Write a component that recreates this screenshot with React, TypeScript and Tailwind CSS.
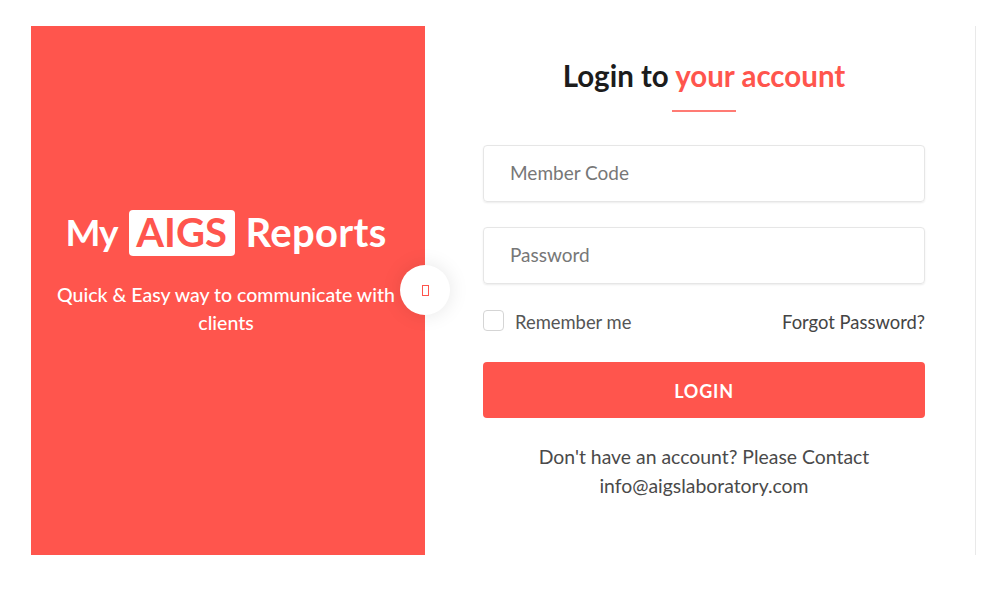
const FONT = "font-['Lato','Noto_Sans',sans-serif]";

export default function App() {
  return (
    <div className={`${FONT} w-[1000px] h-[596px] bg-white pt-[26px] pl-[31px] overflow-hidden`}>
      <div className="flex w-[945px] h-[529px] border-r border-[#e9e9e9]">
        <div className="relative w-[394px] shrink-0 bg-[#ff554d] flex flex-col items-center justify-center text-white pb-[36px]">
          <div className="flex items-center font-bold leading-[46px] pr-[4px]">
            <span className="text-[37px] tracking-[-1px] pb-[3px]">My</span>
            <span className="mx-[11px] flex h-[46px] w-[106px] justify-center rounded-[4px] bg-white text-[#ff554d] text-[40px] leading-[44px] font-bold">AIGS</span>
            <span className="text-[40px] tracking-[0.3px] pb-[3px]">Reports</span>
          </div>
          <p className="mt-[23px] pr-[4px] w-[354px] text-center text-[19.5px] leading-[28px] font-medium">
            Quick &amp; Easy way to communicate with clients
          </p>
          <div className="absolute right-[-25px] top-[239px] w-[50px] h-[50px] rounded-full bg-white shadow-[0_0_20px_rgba(0,0,0,0.1)] flex items-center justify-center">
            <span className="block w-[7px] h-[11px] border border-[#ff554d]" />
          </div>
        </div>

        <div className="flex-1 pl-[58px] pr-[50px] flex flex-col">
          <h1 className="mt-[31px] text-center text-[29.5px] font-bold leading-[38px] text-[#1c1c1c]">
            Login to <span className="text-[#ff554d]">your account</span>
          </h1>
          <div className="mx-auto mt-[15px] w-[64px] h-[2px] shrink-0 bg-[#ff7b74]" />
          <input
            placeholder="Member Code"
            className="mt-[33px] h-[57px] w-full rounded-[4px] border border-[#e6e6e6] shadow-[0_1px_2px_rgba(0,0,0,0.08)] pl-[26px] pr-[26px] pb-[3px] text-[19px] text-[#777] placeholder:text-[#777] outline-none"
          />
          <input
            type="password"
            placeholder="Password"
            className="mt-[25px] h-[57px] w-full rounded-[4px] border border-[#e6e6e6] shadow-[0_1px_2px_rgba(0,0,0,0.08)] pl-[26px] pr-[26px] pb-[3px] text-[19px] text-[#777] placeholder:text-[#777] outline-none"
          />
          <div className="mt-[25px] flex items-center justify-between h-[22px] text-[18.4px] text-[#555]">
            <label className="flex items-center gap-[11px]">
              <span className="block w-[21px] h-[21px] rounded-[4px] border border-[#d5d5d5] bg-white" />
              <span className="leading-[24px] pt-[4px]">Remember me</span>
            </label>
            <a className="text-[#444] leading-[24px] pt-[4px]">Forgot Password?</a>
          </div>
          <button className="mt-[31px] h-[56px] w-full rounded-[4px] bg-[#ff554d] pt-[2px] text-white text-[18px] font-bold tracking-[0.8px]">
            LOGIN
          </button>
          <p className="mt-[24px] mx-auto w-[360px] text-center text-[19.4px] leading-[29px] text-[#4a4a4a]">
            Don't have an account? Please Contact info@aigslaboratory.com
          </p>
        </div>
      </div>
    </div>
  );
}
